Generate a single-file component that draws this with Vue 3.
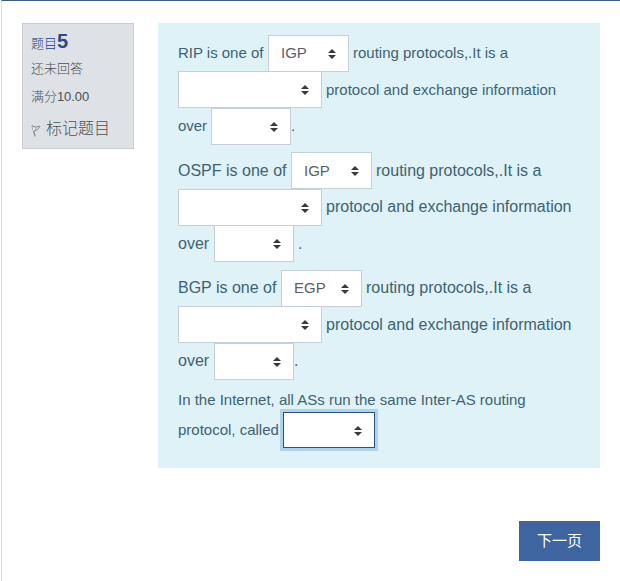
<script setup>
const questions = [
  {
    size: 'small',
    lines: [
      { before: 'RIP is one of', lead: 90, value: 'IGP', width: 81, after: 'routing protocols,.It is a', gap: 4 },
      { before: '', lead: 0, value: '', width: 144, after: 'protocol and exchange information', gap: 4 },
      { before: 'over', lead: 33, value: '', width: 80, after: '.', gap: 0 },
    ],
  },
  {
    size: 'regular',
    lines: [
      { before: 'OSPF is one of', lead: 113, value: 'IGP', width: 81, after: 'routing protocols,.It is a', gap: 4 },
      { before: '', lead: 0, value: '', width: 144, after: 'protocol and exchange information', gap: 4 },
      { before: 'over', lead: 36, value: '', width: 80, after: '.', gap: 4 },
    ],
  },
  {
    size: 'regular',
    lines: [
      { before: 'BGP is one of', lead: 103, value: 'EGP', width: 81, after: 'routing protocols,.It is a', gap: 4 },
      { before: '', lead: 0, value: '', width: 144, after: 'protocol and exchange information', gap: 4 },
      { before: 'over', lead: 36, value: '', width: 80, after: '.', gap: 0 },
    ],
  },
]
</script>

<template>
  <div class="page">
    <main class="question">
      <aside class="info">
        <h3 class="number">题目<b>5</b></h3>
        <div class="state">还未回答</div>
        <div class="grade">满分10.00</div>
        <div class="flag">
          <svg width="10" height="13" viewBox="0 0 10 13" fill="none" stroke="#85898d">
            <path d="M1 1.5 L4.2 12.5" stroke-width="1.3" />
            <path d="M1.2 2 L4.5 3 L9 2.3 L6.5 5.6 L2.4 7.4" fill="#e6e9ec" />
            <path d="M4.5 3 L5 6" stroke-width=".7" />
          </svg>
          <span>标记题目</span>
        </div>
      </aside>
      <section class="formulation">
        <div v-for="(q, i) in questions" :key="i" class="para" :class="q.size">
          <div v-for="(line, j) in q.lines" :key="j" class="line">
            <span class="before" :style="{ width: line.lead + 'px' }">{{ line.before }}</span>
            <span class="select" :style="{ width: line.width + 'px' }">
              <span>{{ line.value }}</span>
              <svg class="caret" width="8" height="10" viewBox="0 0 8 10"><path d="M0 4 L4 0 L8 4Z M0 6 L4 10 L8 6Z" fill="#343a40" /></svg>
            </span>
            <span class="after" :style="{ marginLeft: line.gap + 'px' }">{{ line.after }}</span>
          </div>
        </div>
        <div class="last">
          <div class="sentence">In the Internet, all ASs run the same Inter-AS routing</div>
          <div class="called">
            <span class="before">protocol, called</span>
            <span class="select focused">
              <span></span>
              <svg class="caret" width="8" height="10" viewBox="0 0 8 10"><path d="M0 4 L4 0 L8 4Z M0 6 L4 10 L8 6Z" fill="#343a40" /></svg>
            </span>
          </div>
        </div>
      </section>
    </main>
    <div class="nav"><button class="next">下一页</button></div>
  </div>
</template>

<style>
body { background: #fff; }
</style>
<style scoped>
.page {
  box-sizing: border-box;
  height: 581px;
  overflow: hidden;
  border-top: 1px solid #3f5c8c;
  border-left: 1px solid #dcdee2;
  margin-left: 1px;
  padding: 22px 20px 0;
  font-family: "Liberation Sans", "Noto Sans CJK SC", sans-serif;
}
.question { display: flex; justify-content: space-between; align-items: flex-start; }
.info {
  box-sizing: border-box;
  width: 112px;
  height: 126px;
  padding: 4px 7px 4px 8px;
  border: 1px solid #cacdd2;
  background: #dee2e7;
  color: #4c5054;
  font-size: 13px;
  font-weight: 300;
  white-space: nowrap;
}
.number { margin: 0; height: 27px; line-height: 27px; font-size: 13px; font-weight: 300; color: #203f7e; }
.number b { font-size: 20px; font-weight: 700; color: #2d4a86; }
.state, .grade { height: 28px; line-height: 28px; }
.grade { letter-spacing: -.05px; }
.flag { display: flex; align-items: center; gap: 5px; height: 31px; font-size: 16px; }
.flag svg { margin: 7px 0 0; }
.formulation {
  box-sizing: border-box;
  width: 442px;
  height: 445px;
  padding: 12px 20px 0;
  background: #def2f8;
  color: #3f6272;
  white-space: nowrap;
}
.para { height: 110px; margin-bottom: 7.5px; }
.line { display: flex; align-items: center; height: 36.6px; }
.small { font-size: 15px; }
.small .before, .small .after { padding-bottom: 1px; }
.small .before { letter-spacing: -.02px; }
.regular { font-size: 16px; }
.before { flex: none; }
.select {
  box-sizing: border-box;
  flex: none;
  display: flex;
  align-items: center;
  justify-content: space-between;
  height: 37px;
  padding: 0 12px 1px;
  border: 1px solid #c6ced6;
  background: #fff;
  color: #5a6066;
  font-size: 15px;
}
.caret { flex: none; margin-top: 2px; }
.last { font-size: 15px; }
.sentence { height: 24px; line-height: 24px; }
.called { display: flex; align-items: center; height: 37px; }
.called .before { width: 105px; padding-bottom: 2px; }
.focused { width: 92px; height: 36px; border-color: #304f80; box-shadow: 0 0 0 3px #add3f0; }
.nav { display: flex; justify-content: flex-end; margin-top: 53px; }
.next {
  width: 81px;
  height: 40px;
  padding: 0 0 3px;
  border: 0;
  background: #3e65a0;
  color: #fff;
  font: 15px "Liberation Sans", "Noto Sans CJK SC", sans-serif;
}
</style>
